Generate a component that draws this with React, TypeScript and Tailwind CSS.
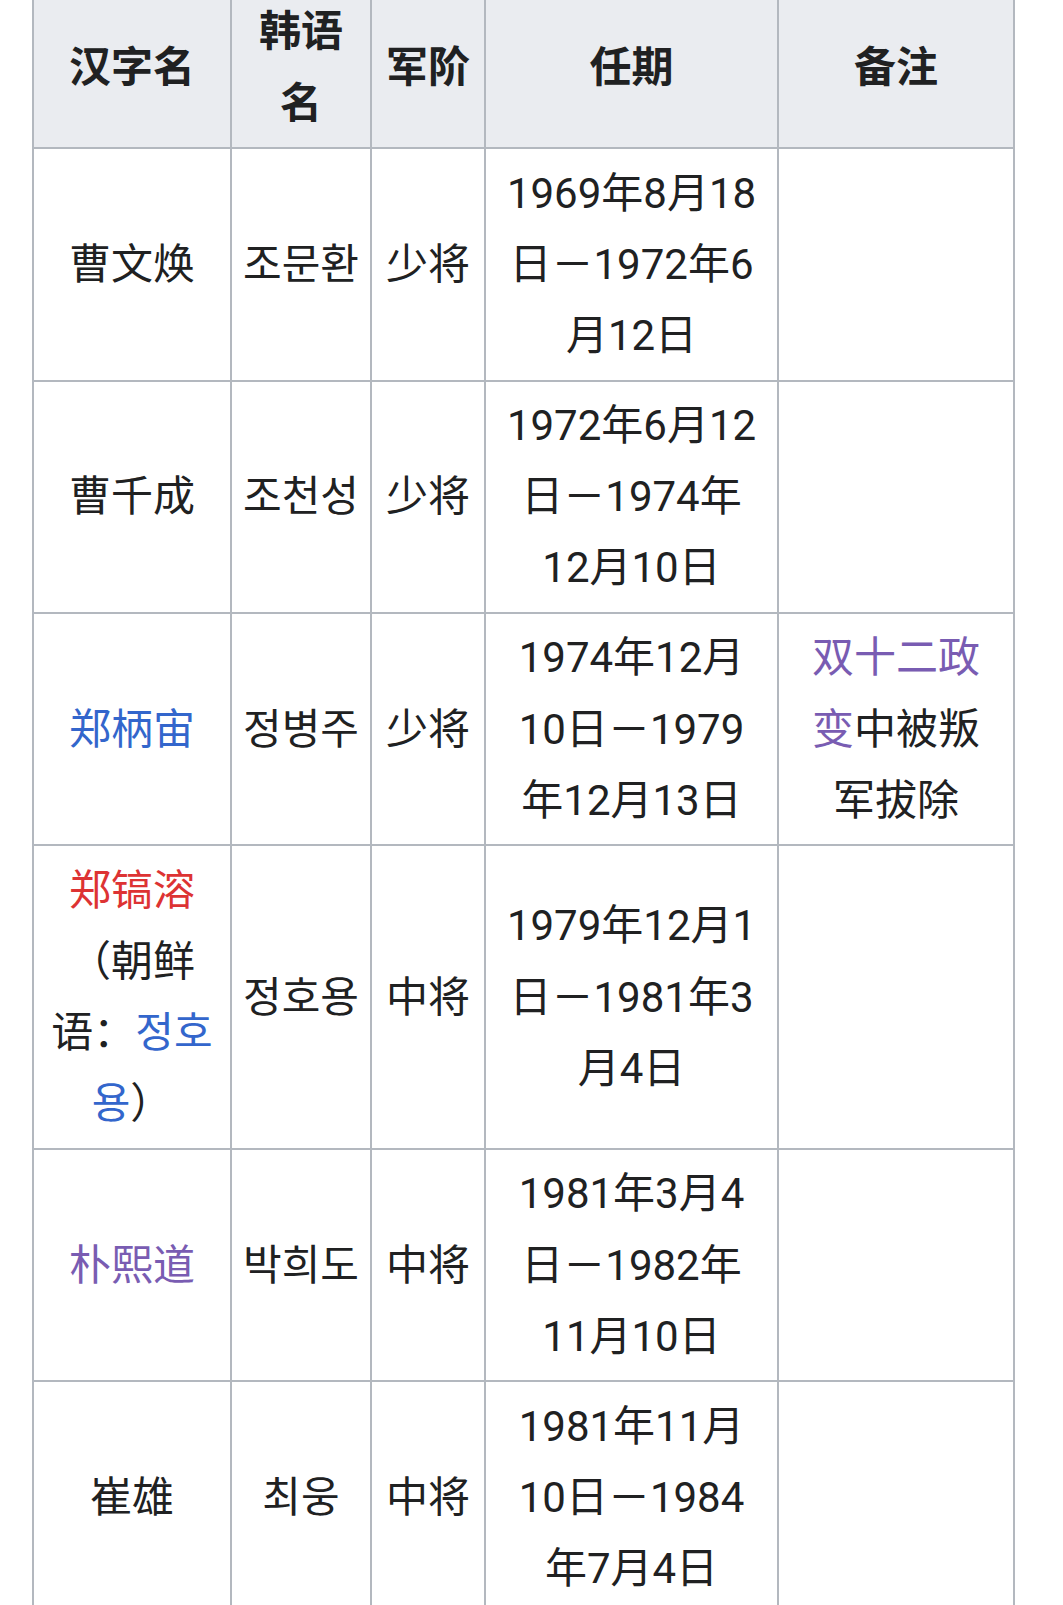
import React from 'react';

const FONT = "font-['Roboto','Noto_Sans_CJK_SC',sans-serif]";

function Head({ children }: { children: React.ReactNode }) {
  return (
    <div className="bg-[#eaecf0] flex flex-col justify-center items-center text-center font-bold px-2 py-[8.4px] whitespace-nowrap">
      {children}
    </div>
  );
}

function Cell({ children }: { children?: React.ReactNode }) {
  return (
    <div className="bg-white flex flex-col justify-center items-center text-center px-2 py-[8.4px] whitespace-nowrap">
      <div>{children}</div>
    </div>
  );
}

const Blue = ({ children }: { children: React.ReactNode }) => <span className="text-[#3366cc]">{children}</span>;
const Red = ({ children }: { children: React.ReactNode }) => <span className="text-[#d33]">{children}</span>;
const Purple = ({ children }: { children: React.ReactNode }) => <span className="text-[#795cb2]">{children}</span>;

export default function App() {
  return (
    <div className={`min-h-screen bg-white overflow-hidden ${FONT} text-[#202122] text-[42px] leading-[71.2px]`}>
      <div className="ml-[32px] -mt-[14px] w-[983px] bg-[#b3b8bf] p-[2px] grid grid-cols-[196px_138px_112px_291px_234px] gap-[2px]">
        <Head>汉字名</Head>
        <Head>
          韩语
          <br />名
        </Head>
        <Head>军阶</Head>
        <Head>任期</Head>
        <Head>备注</Head>

        {/* 曹文焕 */}
        <Cell>曹文焕</Cell>
        <Cell>조문환</Cell>
        <Cell>少将</Cell>
        <Cell>
          1969年8月18
          <br />日－1972年6
          <br />月12日
        </Cell>
        <Cell />

        {/* 曹千成 */}
        <Cell>曹千成</Cell>
        <Cell>조천성</Cell>
        <Cell>少将</Cell>
        <Cell>
          1972年6月12
          <br />日－1974年
          <br />12月10日
        </Cell>
        <Cell />

        {/* 郑柄宙 */}
        <Cell>
          <Blue>郑柄宙</Blue>
        </Cell>
        <Cell>정병주</Cell>
        <Cell>少将</Cell>
        <Cell>
          1974年12月
          <br />10日－1979
          <br />年12月13日
        </Cell>
        <Cell>
          <Purple>双十二政</Purple>
          <br />
          <Purple>变</Purple>中被叛
          <br />军拔除
        </Cell>

        {/* 郑镐溶 */}
        <Cell>
          <Red>郑镐溶</Red>
          <br />（朝鲜
          <br />语：<Blue>정호</Blue>
          <br />
          <Blue>용</Blue>）
        </Cell>
        <Cell>정호용</Cell>
        <Cell>中将</Cell>
        <Cell>
          1979年12月1
          <br />日－1981年3
          <br />月4日
        </Cell>
        <Cell />

        {/* 朴熙道 */}
        <Cell>
          <Purple>朴熙道</Purple>
        </Cell>
        <Cell>박희도</Cell>
        <Cell>中将</Cell>
        <Cell>
          1981年3月4
          <br />日－1982年
          <br />11月10日
        </Cell>
        <Cell />

        {/* 崔雄 */}
        <Cell>崔雄</Cell>
        <Cell>최웅</Cell>
        <Cell>中将</Cell>
        <Cell>
          1981年11月
          <br />10日－1984
          <br />年7月4日
        </Cell>
        <Cell />
      </div>
    </div>
  );
}
